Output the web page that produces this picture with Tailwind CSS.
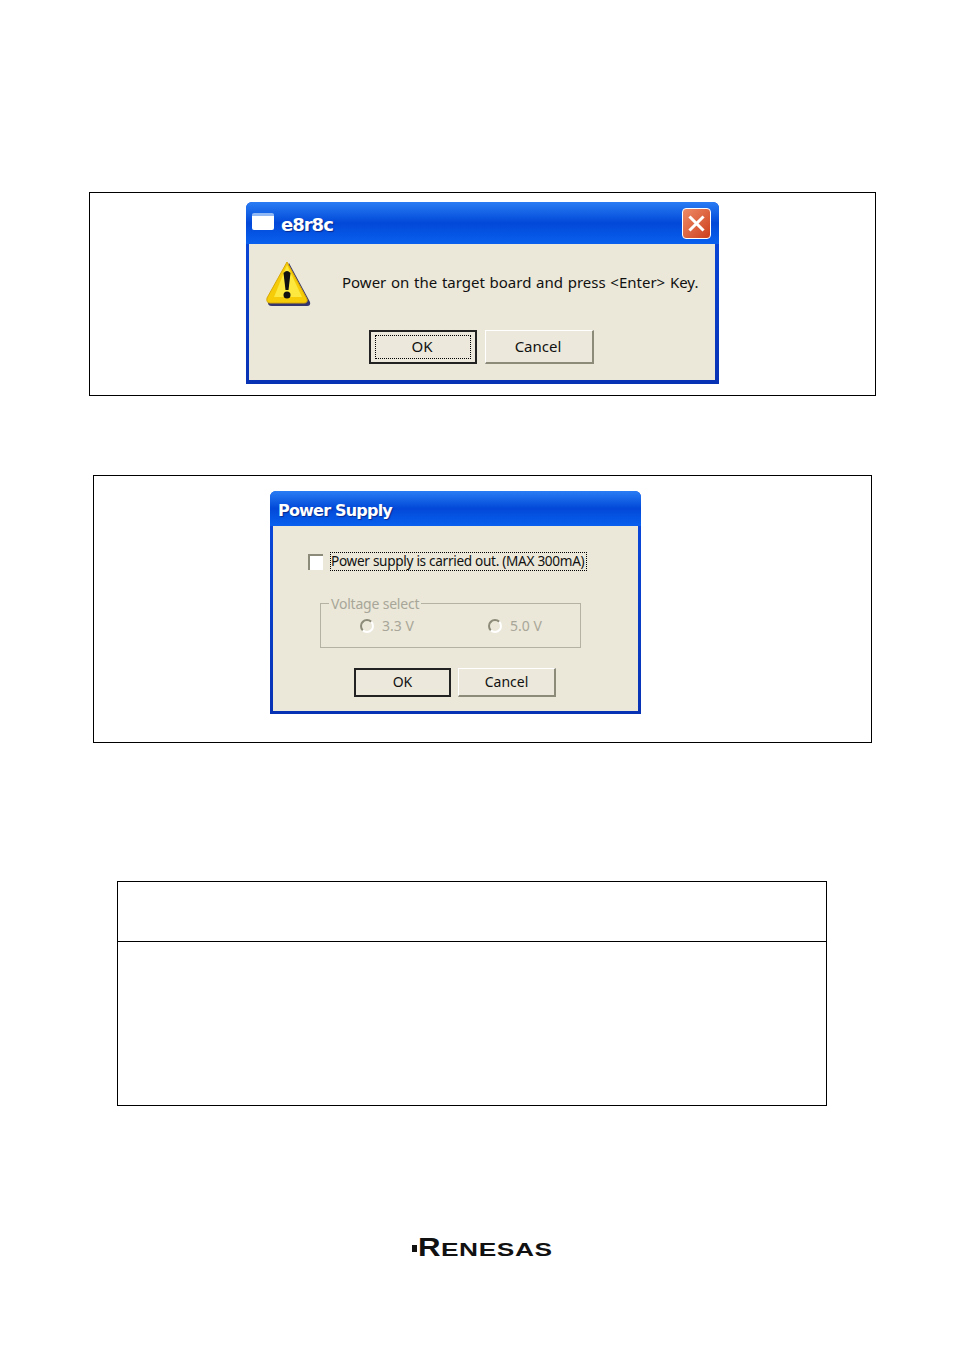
<!DOCTYPE html>
<html lang="en">
<head>
  <meta charset="UTF-8">
  <title>Power Supply</title>
  <script src="https://cdn.jsdelivr.net/npm/@tailwindcss/browser@4"></script>
</head>
<body class="bg-white h-[1354px] overflow-hidden font-['Noto_Sans',sans-serif] text-[#111]">
  <div class="w-[954px] pt-[192px]">

    <!-- e8r8c dialog -->
    <section class="ml-[89px] w-[787px] h-[204px] border-[1.5px] border-black pt-[9px] pl-[156px]">
      <div class="w-[473px] h-[182px] flex flex-col rounded-t-[6px] overflow-hidden bg-gradient-to-b from-[#0a4be0] to-[#0832b4] pl-[3px] pr-[4px] pb-[4px]">
        <div class="h-[42px] -ml-[3px] -mr-[4px] shrink-0 flex items-center pl-[6px] pr-[8px] bg-gradient-to-b from-[#2a7cf4] via-[#0348d8] to-[#0a60ee]">
          <div class="w-[22px] h-[17px] bg-white rounded-[2px] border-t-[3px] border-[#8fb8f4] -mt-[3px]"></div>
          <span class="ml-[7px] mt-[3px] text-[18px] leading-none font-bold text-white font-['DejaVu_Sans',sans-serif] tracking-[-1px] [text-shadow:1px_1px_1px_#0a2a90]">e8r8c</span>
          <div class="ml-auto w-[29px] h-[31px] rounded-[4px] border border-white bg-gradient-to-br from-[#ee8a66] to-[#cc3c16] flex items-center justify-center">
            <svg width="17" height="17" viewBox="0 0 17 17"><path d="M2.5 2.5 14.5 14.5M14.5 2.5 2.5 14.5" stroke="#fff" stroke-width="3" stroke-linecap="square"/></svg>
          </div>
        </div>
        <div class="flex-1 bg-[#ebe8d9] flex flex-col">
          <div class="flex items-start pt-[16px] pl-[17px]">
            <svg width="46" height="47" viewBox="0 0 46 47" class="shrink-0">
              <path d="M23 3 44 42Q45 46 41 46H6Q1 46 2 41Z" fill="#34346e"/>
              <path d="M21 2 41 39Q42 43 38 43H4Q0 43 1 38Z" fill="#f6cc08" stroke="#d8a808"/>
              <path d="M21 5 36 37H8Z" fill="#fce83e"/>
              <path d="M17.500 13Q21 9 24.500 13L22.500 30H19.500Z" fill="#111"/>
              <circle cx="21" cy="35" r="3.500" fill="#111"/>
            </svg>
            <span class="ml-[30px] mt-[11px] text-[15px] leading-[22px] [word-spacing:0.800px] whitespace-nowrap">Power on the target board and press &lt;Enter&gt; Key.</span>
          </div>
          <div class="flex pl-[120px] mt-[23px] gap-[8px]">
            <div class="w-[108px] h-[34px] border-2 border-[#222] bg-[#ece9dc] px-[4px] py-[3px]">
              <div class="h-full border border-dotted border-black flex items-center justify-center text-[15px] pb-[2px] pr-[2px]">OK</div>
            </div>
            <div class="w-[109px] h-[34px] border-r-2 border-b-2 border-[#8c8a78] border-t border-l border-t-white border-l-white bg-[#ece9dc] flex items-center justify-center text-[15px] pr-[2px]">Cancel</div>
          </div>
        </div>
      </div>
    </section>

    <!-- Power Supply dialog -->
    <section class="ml-[93px] mt-[79px] w-[779px] h-[268px] border border-black pt-[15px] pl-[176px]">
      <div class="w-[371px] h-[223px] flex flex-col rounded-t-[6px] overflow-hidden bg-gradient-to-b from-[#0a4be0] to-[#0832b4] pl-[3px] pr-[3px] pb-[3px]">
        <div class="h-[35px] -mx-[3px] shrink-0 flex items-center pl-[8px] bg-gradient-to-b from-[#2a7cf4] via-[#0348d8] to-[#0a60ee]">
          <span class="mt-[4px] text-[16px] leading-none font-bold text-white font-['DejaVu_Sans',sans-serif] tracking-[-0.8px] [text-shadow:1px_1px_1px_#0a2a90]">Power Supply</span>
        </div>
        <div class="flex-1 bg-[#ebe8d9] flex flex-col">
          <div class="flex items-center pl-[35px] pt-[26px]">
            <div class="w-[15px] h-[16px] bg-white border-t-2 border-l-2 border-[#8c8a78]"></div>
            <div class="ml-[7px] w-[257px] h-[19px] border border-dotted border-black flex items-center text-[13.600px] tracking-[-0.3px] whitespace-nowrap">Power supply is carried out. (MAX 300mA)</div>
          </div>
          <div class="relative ml-[47px] mt-[32px] w-[261px] h-[45px] border border-[#b4b2a2] flex pl-[39px] pt-[7px] text-[14px] leading-[20px] text-[#a8a698]">
            <span class="absolute left-[8px] -top-[8px] bg-[#ebe8d9] px-[2px] leading-[16px] tracking-[-0.2px]">Voltage select</span>
            <div class="flex items-center w-[128px] h-[30px]">
              <div class="w-[14px] h-[14px] rounded-full border-2 border-[#8c8a78] border-r-white border-b-white bg-[#ebe8d9]"></div>
              <span class="ml-[8px]">3.3 V</span>
            </div>
            <div class="flex items-center h-[30px]">
              <div class="w-[14px] h-[14px] rounded-full border-2 border-[#8c8a78] border-r-white border-b-white bg-[#ebe8d9]"></div>
              <span class="ml-[8px]">5.0 V</span>
            </div>
          </div>
          <div class="flex pl-[81px] mt-[20px] gap-[7px]">
            <div class="w-[97px] h-[29px] border-2 border-[#222] bg-[#ece9dc] flex items-center justify-center text-[14px] pb-[2px]">OK</div>
            <div class="w-[98px] h-[29px] border-r-2 border-b-2 border-[#8c8a78] border-t border-l border-t-white border-l-white bg-[#ece9dc] flex items-center justify-center text-[14px] pb-[2px]">Cancel</div>
          </div>
        </div>
      </div>
    </section>

    <!-- empty table -->
    <section class="ml-[117px] mt-[138px] w-[710px] h-[225px] border border-black flex flex-col">
      <div class="h-[60px] border-b border-black"></div>
      <div class="flex-1"></div>
    </section>

    <!-- logo -->
    <div class="ml-[412px] mt-[128px] h-[26px] flex items-baseline text-[#111] font-['Liberation_Sans',sans-serif] leading-none">
      <span class="w-[5px] h-[7px] bg-[#111] self-center mr-[1px] mt-[3px]"></span>
      <span class="text-[26px] font-bold scale-x-[1.2] origin-left w-[23px]">R</span>
      <span class="text-[18px] font-bold scale-x-[1.46] origin-left tracking-[0.4px]">ENESAS</span>
    </div>
  </div>
</body>
</html>
